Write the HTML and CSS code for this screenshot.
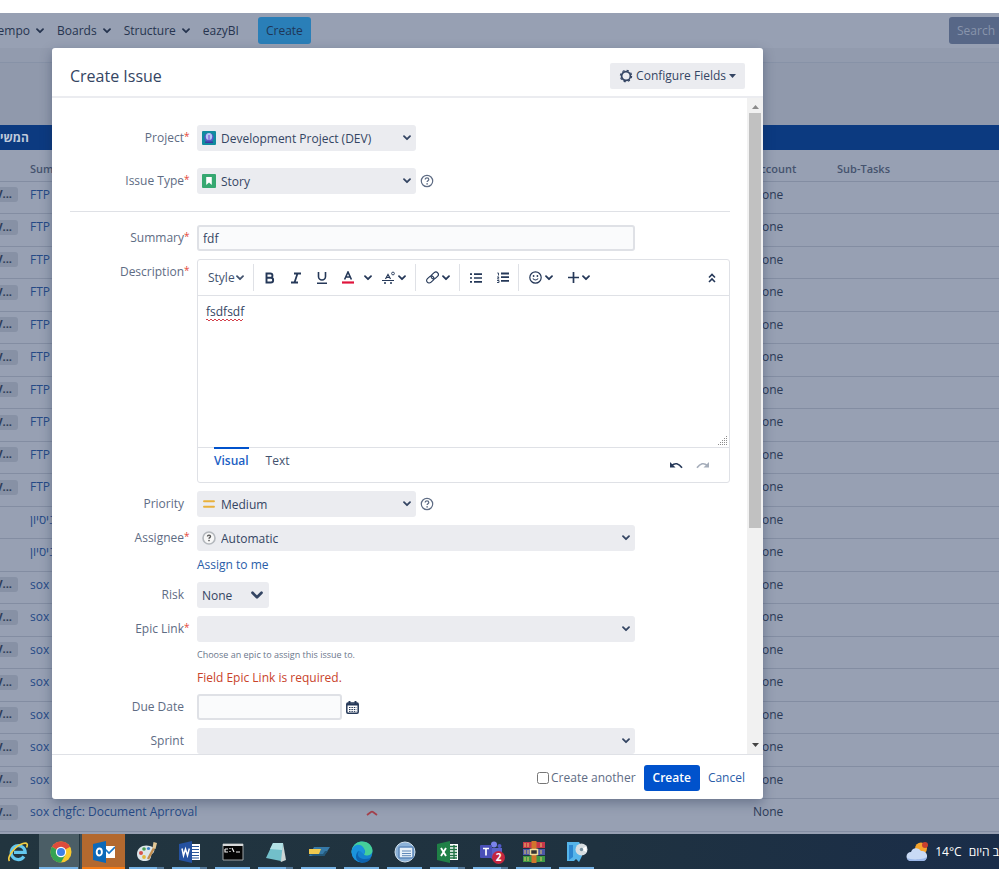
FILE: index.html
```html
<!DOCTYPE html>
<html lang="en">
<head>
    <meta charset="UTF-8">
    <meta name="viewport" content="width=device-width, initial-scale=1.0">
    <title>Create Issue</title>
    <link rel="stylesheet" href="styles.css">
</head>
<body>

    <!-- Shared icons -->
    <svg class="sprite" aria-hidden="true">
        <symbol id="chevron" viewBox="0 0 8 6"><path d="M1 1.2l3 3 3-3" fill="none" stroke="currentColor" stroke-width="1.8" stroke-linecap="round" stroke-linejoin="round"/></symbol>
        <symbol id="help" viewBox="0 0 14 14"><circle cx="7" cy="7" r="5.7" fill="none" stroke="currentColor" stroke-width="1.2"/><path d="M5.2 5.6c0-2.4 3.6-2.3 3.6-.1 0 1.3-1.7 1.2-1.7 2.6" fill="none" stroke="currentColor" stroke-width="1.2"/><circle cx="7.1" cy="9.9" r=".8" fill="currentColor"/></symbol>
        <symbol id="major" viewBox="0 0 12 6"><path d="M1 5l4-3q1-.6 2 0l4 3" fill="none" stroke="#a5414c" stroke-width="1.8"/></symbol>
    </svg>

    <div class="top-strip"></div>

    <main class="app">
        <nav class="navbar">
            <a href="#" class="nav-link">Tempo <svg class="chevron"><use href="#chevron"/></svg></a>
            <a href="#" class="nav-link">Boards <svg class="chevron"><use href="#chevron"/></svg></a>
            <a href="#" class="nav-link">Structure <svg class="chevron"><use href="#chevron"/></svg></a>
            <a href="#" class="nav-link">eazyBI</a>
            <button class="nav-create">Create</button>
            <input class="nav-search" type="text" placeholder="Search" aria-label="Search">
        </nav>
        <div class="subnav"></div>
        <div class="board-space"></div>
        <div class="board-title" dir="rtl" lang="he"><span>המשימות</span></div>

        <table class="issues">
            <colgroup><col class="c-status"><col class="c-summary"><col class="c-priority"><col class="c-account"><col></colgroup>
            <thead>
                <tr><th></th><th>Summary</th><th></th><th>Account</th><th>Sub-Tasks</th></tr>
            </thead>
            <tbody>
                <tr><td><span class="pill">V...</span></td><td><a href="#">FTP</a></td><td></td><td>None</td><td></td></tr>
                <tr><td><span class="pill">V...</span></td><td><a href="#">FTP</a></td><td></td><td>None</td><td></td></tr>
                <tr><td><span class="pill">V...</span></td><td><a href="#">FTP</a></td><td></td><td>None</td><td></td></tr>
                <tr><td><span class="pill">V...</span></td><td><a href="#">FTP</a></td><td></td><td>None</td><td></td></tr>
                <tr><td><span class="pill">V...</span></td><td><a href="#">FTP</a></td><td></td><td>None</td><td></td></tr>
                <tr><td><span class="pill">V...</span></td><td><a href="#">FTP</a></td><td></td><td>None</td><td></td></tr>
                <tr><td><span class="pill">V...</span></td><td><a href="#">FTP</a></td><td></td><td>None</td><td></td></tr>
                <tr><td><span class="pill">V...</span></td><td><a href="#">FTP</a></td><td></td><td>None</td><td></td></tr>
                <tr><td><span class="pill">V...</span></td><td><a href="#">FTP</a></td><td></td><td>None</td><td></td></tr>
                <tr><td><span class="pill">V...</span></td><td><a href="#">FTP</a></td><td></td><td>None</td><td></td></tr>
                <tr><td></td><td><a href="#" lang="he">ניסיון</a></td><td></td><td>None</td><td></td></tr>
                <tr><td></td><td><a href="#" lang="he">ניסיון</a></td><td></td><td>None</td><td></td></tr>
                <tr><td><span class="pill">V...</span></td><td><a href="#">sox</a></td><td></td><td>None</td><td></td></tr>
                <tr><td><span class="pill">V...</span></td><td><a href="#">sox</a></td><td></td><td>None</td><td></td></tr>
                <tr><td><span class="pill">V...</span></td><td><a href="#">sox</a></td><td></td><td>None</td><td></td></tr>
                <tr><td><span class="pill">V...</span></td><td><a href="#">sox</a></td><td></td><td>None</td><td></td></tr>
                <tr><td><span class="pill">V...</span></td><td><a href="#">sox</a></td><td></td><td>None</td><td></td></tr>
                <tr><td><span class="pill">V...</span></td><td><a href="#">sox</a></td><td></td><td>None</td><td></td></tr>
                <tr><td><span class="pill">V...</span></td><td><a href="#">sox</a></td><td></td><td>None</td><td></td></tr>
                <tr><td><span class="pill">V...</span></td><td><a href="#">sox chgfc: Document Aprroval</a></td><td><svg class="major"><use href="#major"/></svg></td><td>None</td><td></td></tr>
            </tbody>
        </table>

        <!-- Create issue dialog -->
        <div class="overlay">
            <form class="dialog" role="dialog" aria-labelledby="dialogTitle">
                <header class="dialog-header">
                    <h2 id="dialogTitle">Create Issue</h2>
                    <button type="button" class="btn-configure">
                        <svg width="14" height="14" viewBox="0 0 14 14"><circle cx="7" cy="7" r="4.4" fill="none" stroke="currentColor" stroke-width="1.7"/><circle cx="7" cy="7" r="5.600" fill="none" stroke="currentColor" stroke-width="1.200" stroke-dasharray="2.200 2.200"/></svg>
                        Configure Fields
                        <svg width="7" height="4" viewBox="0 0 7 4"><path d="M0 0h7L3.500 4z" fill="currentColor"/></svg>
                    </button>
                </header>

                <div class="dialog-body">
                    <div class="fields">
                        <div class="field wide-gap">
                            <label for="project">Project<sup>*</sup></label>
                            <div class="select medium has-icon">
                                <svg class="field-icon" viewBox="0 0 14 14"><rect width="14" height="14" rx="1" fill="#118b9f"/><circle cx="7" cy="6.500" r="4.600" fill="#5c54c8"/><ellipse cx="7" cy="5.500" rx="3.200" ry="3.500" fill="#b4c9f4"/><path d="M7 4v5" stroke="#9a85df" stroke-width="2"/><path d="M3 10.500h8v1.500H3z" fill="#3a39a0"/></svg>
                                <select id="project"><option>Development Project (DEV)</option></select>
                                <svg class="chevron"><use href="#chevron"/></svg>
                            </div>
                        </div>
                        <div class="field wide-gap">
                            <label for="type">Issue Type<sup>*</sup></label>
                            <div class="select medium has-icon">
                                <svg class="field-icon" viewBox="0 0 14 14"><rect width="14" height="14" rx="1" fill="#36a871"/><path d="M4.200 3h5.600v8L7 8.500 4.200 11z" fill="#fff"/></svg>
                                <select id="type"><option>Story</option></select>
                                <svg class="chevron"><use href="#chevron"/></svg>
                            </div>
                            <svg class="help"><use href="#help"/></svg>
                        </div>
                        <hr>
                        <div class="field">
                            <label for="summary">Summary<sup>*</sup></label>
                            <input class="text-input long" id="summary" type="text" value="fdf">
                        </div>
                        <div class="field top">
                            <label for="description">Description<sup>*</sup></label>
                            <div class="editor">
                                <div class="toolbar">
                                    <div class="tool-group">
                                        <button type="button" class="tool style">Style<svg class="chevron"><use href="#chevron"/></svg></button>
                                    </div>
                                    <div class="tool-group format">
                                        <button type="button" class="tool" aria-label="Bold"><svg width="12" height="12" viewBox="0 0 12 12"><path d="M2.500 1.500h3.800a2.100 2.100 0 0 1 0 4.300H2.500zM2.500 5.800h4.300a2.300 2.300 0 0 1 0 4.700H2.500z" fill="none" stroke="currentColor" stroke-width="1.900"/></svg></button>
                                        <button type="button" class="tool" aria-label="Italic"><svg width="12" height="12" viewBox="0 0 12 12"><path d="M4 1.500h7M1 10.500h7M7.500 1.500l-3 9" fill="none" stroke="currentColor" stroke-width="1.800"/></svg></button>
                                        <button type="button" class="tool" aria-label="Underline"><svg width="12" height="12" viewBox="0 0 12 12"><path d="M2.500 0v4.500a3.500 3.500 0 0 0 7 0V0M1 11.200h10" fill="none" stroke="currentColor" stroke-width="1.600"/></svg></button>
                                        <button type="button" class="tool" aria-label="Text colour"><svg width="12" height="13" viewBox="0 0 12 13"><path d="M2.600 8.500L6 1l3.400 7.500M3.800 6h4.400" fill="none" stroke="currentColor" stroke-width="1.600"/><path d="M0 11.500h12" stroke="#e0143c" stroke-width="2.200"/></svg></button>
                                        <button type="button" class="tool" aria-label="More colours"><svg class="chevron"><use href="#chevron"/></svg></button>
                                        <button type="button" class="tool" aria-label="More formatting"><svg width="13" height="14" viewBox="0 0 13 14"><path d="M3.500 8L6 3.500 8.500 8M4.500 6.500h3" fill="none" stroke="currentColor" stroke-width="1.200"/><path d="M0 9.500h12" stroke="currentColor"/><path d="M2 12h2M8 12h2" stroke="currentColor" stroke-width="1.600"/><circle cx="11" cy="2.500" r="1.400" fill="none" stroke="currentColor" stroke-width=".9"/></svg><svg class="chevron"><use href="#chevron"/></svg></button>
                                    </div>
                                    <div class="tool-group">
                                        <button type="button" class="tool" aria-label="Link"><svg width="13" height="13" viewBox="0 0 13 13"><g fill="none" stroke="currentColor" stroke-width="1.200" transform="rotate(-42 6.500 6.500)"><rect x="-.5" y="4" width="8" height="5" rx="2.500"/><rect x="5.500" y="4" width="8" height="5" rx="2.500"/></g></svg><svg class="chevron"><use href="#chevron"/></svg></button>
                                    </div>
                                    <div class="tool-group lists">
                                        <button type="button" class="tool" aria-label="Bullet list"><svg width="12" height="10" viewBox="0 0 12 10"><path d="M4 1.200h8M4 5h8M4 8.800h8M0 1.200h2M0 5h2M0 8.800h2" stroke="currentColor" stroke-width="1.700"/></svg></button>
                                        <button type="button" class="tool" aria-label="Numbered list"><svg width="12" height="11" viewBox="0 0 12 11"><path d="M4 1.500h8M4 5.200h8M4 8.900h8" stroke="currentColor" stroke-width="1.800"/><path d="M.3 1h1.200v2.500M0 5h2L.5 7h1.700M0 8.500h2v2H0" fill="none" stroke="currentColor" stroke-width=".9"/></svg></button>
                                    </div>
                                    <div class="tool-group inserts">
                                        <button type="button" class="tool" aria-label="Emoji"><svg width="13" height="13" viewBox="0 0 13 13"><circle cx="6.500" cy="6.500" r="5.700" fill="none" stroke="currentColor" stroke-width="1.200"/><circle cx="4.600" cy="5" r=".9" fill="currentColor"/><circle cx="8.400" cy="5" r=".9" fill="currentColor"/><path d="M3.800 7.500q2.700 3 5.400 0" fill="none" stroke="currentColor" stroke-width="1.100"/></svg><svg class="chevron"><use href="#chevron"/></svg></button>
                                        <button type="button" class="tool" aria-label="Insert"><svg width="11" height="11" viewBox="0 0 11 11"><path d="M5.500 0v11M0 5.500h11" stroke="currentColor" stroke-width="1.700"/></svg><svg class="chevron"><use href="#chevron"/></svg></button>
                                    </div>
                                    <button type="button" class="tool collapse" aria-label="Collapse toolbar"><svg width="8" height="10" viewBox="0 0 8 10"><path d="M1 4.500l3-3 3 3M1 9l3-3 3 3" fill="none" stroke="currentColor" stroke-width="1.600"/></svg></button>
                                </div>
                                <div class="editor-area">
                                    <textarea id="description" spellcheck="false">fsdfsdf</textarea>
                                    <svg class="squiggle" viewBox="0 0 38 3"><path d="M0 2l1-1 2 2 2-2 2 2 2-2 2 2 2-2 2 2 2-2 2 2 2-2 2 2 2-2 2 2 2-2 2 2 2-2 2 2 2-2" fill="none" stroke="#d3404b"/></svg>
                                    <svg class="grip" viewBox="0 0 9 9"><path d="M0 8.500h9M2 6.500h7M4 4.500h5M6 2.500h3M8 .5h1" stroke="#8d8d8d" stroke-dasharray="1 1"/></svg>
                                </div>
                                <div class="editor-footer">
                                    <div class="tabs">
                                        <button type="button" class="tab active">Visual</button>
                                        <button type="button" class="tab">Text</button>
                                    </div>
                                    <div class="history">
                                        <button type="button" class="tool" aria-label="Undo"><svg width="13" height="7" viewBox="0 0 13 7"><path d="M1.500 3.500Q7-1 12 5.800" fill="none" stroke="currentColor" stroke-width="1.600"/><path d="M0 0v5.500h5.500z" fill="currentColor"/></svg></button>
                                        <button type="button" class="tool" aria-label="Redo" disabled><svg width="13" height="7" viewBox="0 0 13 7"><path d="M11.500 3.500Q6-1 1 5.800" fill="none" stroke="currentColor" stroke-width="1.600"/><path d="M13 0v5.500H7.500z" fill="currentColor"/></svg></button>
                                    </div>
                                </div>
                            </div>
                        </div>
                        <div class="field">
                            <label for="priority">Priority</label>
                            <div class="select medium has-icon">
                                <svg class="field-icon" viewBox="0 0 14 14"><path d="M2 4.300h10M2 9.700h10" stroke="#e9b13c" stroke-width="1.900" stroke-linecap="round"/></svg>
                                <select id="priority"><option>Medium</option></select>
                                <svg class="chevron"><use href="#chevron"/></svg>
                            </div>
                            <svg class="help"><use href="#help"/></svg>
                        </div>
                        <div class="field">
                            <label for="assignee">Assignee<sup>*</sup></label>
                            <div class="select long has-icon">
                                <svg class="field-icon" viewBox="0 0 14 14"><circle cx="7" cy="7" r="6" fill="#f7f7f7" stroke="#b4b8bd" stroke-width="1.600"/><path d="M5.500 5.600c0-2 3-2 3 0 0 1-1.500 1-1.500 2.200" fill="none" stroke="#555" stroke-width="1.400"/><circle cx="7" cy="9.600" r=".8" fill="#555"/></svg>
                                <select id="assignee"><option>Automatic</option></select>
                                <svg class="chevron"><use href="#chevron"/></svg>
                            </div>
                        </div>
                        <div class="field-note assign"><a href="#">Assign to me</a></div>
                        <div class="field">
                            <label for="risk">Risk</label>
                            <div class="select short">
                                <select id="risk"><option>None</option></select>
                                <svg class="chevron big"><use href="#chevron"/></svg>
                            </div>
                        </div>
                        <div class="field">
                            <label for="epic">Epic Link<sup>*</sup></label>
                            <div class="select long">
                                <select id="epic"><option></option></select>
                                <svg class="chevron"><use href="#chevron"/></svg>
                            </div>
                        </div>
                        <div class="field-note hint">Choose an epic to assign this issue to.</div>
                        <div class="field-note error">Field Epic Link is required.</div>
                        <div class="field">
                            <label for="due">Due Date</label>
                            <input class="text-input date" id="due" type="text">
                            <button type="button" class="tool calendar" aria-label="Pick a date"><svg width="13" height="13" viewBox="0 0 13 13"><rect x=".8" y="2" width="11.400" height="10.200" rx="1.200" fill="none" stroke="currentColor" stroke-width="1.500"/><path d="M1 3.500h11M3.500 0v3M9.500 0v3" stroke="currentColor" stroke-width="1.900"/><path d="M3 6.500h7.500M3 8.500h7.500M3 10.400h7.500" stroke="currentColor" stroke-width="1" stroke-dasharray="1.500 .9"/></svg></button>
                        </div>
                        <div class="field">
                            <label for="sprint">Sprint</label>
                            <div class="select long">
                                <select id="sprint"><option></option></select>
                                <svg class="chevron"><use href="#chevron"/></svg>
                            </div>
                        </div>
                    </div>
                    <div class="scrollbar">
                        <svg width="7" height="4" viewBox="0 0 7 4"><path d="M0 4h7L3.500 0z" fill="#8b8b8b"/></svg>
                        <div class="thumb"></div>
                        <svg width="7" height="4" viewBox="0 0 7 4"><path d="M0 0h7L3.500 4z" fill="#444"/></svg>
                    </div>
                </div>

                <footer class="dialog-footer">
                    <label class="another"><input type="checkbox">Create another</label>
                    <button type="submit" class="btn-primary">Create</button>
                    <a href="#">Cancel</a>
                </footer>
            </form>
        </div>
    </main>

    <!-- Windows taskbar -->
    <footer class="taskbar">
        <button class="task idle" aria-label="Internet Explorer"><svg viewBox="0 0 22 22"><path d="M17 15.500a7 7 0 1 1 1.200-4.200H7" fill="none" stroke="#64c8ef" stroke-width="3.200"/><path d="M2.500 20C-.5 16 8 5 16 2.500c4.500-1.400 5 1.200 3.500 4" fill="none" stroke="#f2cf45" stroke-width="1.700"/></svg></button>
        <button class="task chrome" aria-label="Chrome"><svg viewBox="0 0 22 22"><circle cx="11" cy="11" r="10.500" fill="#f9c92d"/><path d="M11 11L1.900 5.700A10.500 10.500 0 0 1 20.100 5.700z" fill="#df4b3c"/><path d="M11 11L1.900 5.700A10.500 10.500 0 0 0 11 21.500l4.500-8z" fill="#35a353"/><path d="M11 6h9.200l-.5-1L5 4z" fill="#df4b3c"/><circle cx="11" cy="11" r="5.200" fill="#fff"/><circle cx="11" cy="11" r="4" fill="#3f80e8"/></svg></button>
        <button class="task outlook" aria-label="Outlook"><svg viewBox="0 0 22 22"><path d="M9 5h13v12H9z" fill="#fff"/><path d="M10 6l6 6 6-6" fill="none" stroke="#1774c4" stroke-width="1.600"/><path d="M0 3l13-3v22L0 19z" fill="#0c69b8"/><ellipse cx="6.300" cy="11" rx="2.600" ry="3.500" fill="none" stroke="#fff" stroke-width="1.900"/></svg></button>
        <button class="task stacked" aria-label="Paint"><svg viewBox="0 0 22 22"><path d="M1 13C1 6 8 3 14 5c6 2 5 6 2 8-2 1 1 6-6 7-5 .6-9-2-9-7z" fill="#dce6ea"/><circle cx="5" cy="12" r="2" fill="#d6524c"/><circle cx="8" cy="8" r="1.800" fill="#4a9d52"/><circle cx="12.500" cy="7.500" r="1.600" fill="#3d82c9"/><circle cx="8" cy="16" r="1.900" fill="#e4b83d"/><path d="M12 18l6-11" stroke="#c18d4e" stroke-width="2.400"/><path d="M16.500 7l1-6 3.500 1-1.500 6z" fill="#e2c795"/></svg></button>
        <button class="task stacked" aria-label="Word"><svg viewBox="0 0 22 22"><path d="M10 3h11v16H10z" fill="#fff"/><path d="M13 5.500h7M13 8.500h7M13 11.500h7M13 14.500h7M13 17h7" stroke="#2b579a" stroke-width="1.200"/><path d="M0 3l13-3v22L0 19z" fill="#2451a0"/><path d="M3 7.500l1.500 7L6.500 8l2 6.500 1.800-7" fill="none" stroke="#fff" stroke-width="1.500"/></svg></button>
        <button class="task" aria-label="Command Prompt"><svg viewBox="0 0 22 22"><path d="M1 3h20v16H1z" fill="#050505" stroke="#9fa4a6"/><path d="M1 4h20" stroke="#d7d9da" stroke-width="2"/><path d="M3 8h3M3 8v3h3M8 7v1M8 10v1M10 7l2 4M14 11h4" fill="none" stroke="#eee" stroke-width="1.200"/></svg></button>
        <button class="task stacked" aria-label="Notepad"><svg viewBox="0 0 22 22"><path d="M8 2h10l3 17-5 2z" fill="#cdd6d5"/><path d="M8 2h10l-2 18-15-3z" fill="#72bfca"/><path d="M8 2h10l-1 7-12-1z" fill="#b3e1e5"/></svg></button>
        <button class="task" aria-label="Scanner"><svg viewBox="0 0 22 22"><path d="M6 6h16l-6 9H1z" fill="#3679a7"/><path d="M1 8h12l-2 5H1z" fill="#f0c94e"/><path d="M1 13h14l2-3h3l-4 5H5z" fill="#235779"/></svg></button>
        <button class="task" aria-label="Edge"><svg viewBox="0 0 22 22"><circle cx="11" cy="11" r="10.500" fill="#1583cf"/><path d="M.8 9C2 3 7 .5 11 .5c7 0 10.500 5 10.500 9 0 4-3.500 5-6 5-2 0-3-1-2-2 2-3-1-6-5-5.500C4 7.500 2 10 .5 12z" fill="#45cf9a"/><path d="M.6 10C2 3 9 2 12 6c2 2 2 5 1 7-1 1-3-4-6-3-3 2-1 9 5 11.400C5 21 .5 17 .6 10z" fill="#1b93dc"/><path d="M8 10c-4 6 3 10 12 7-3 5-9 6-12 3.500C3 17 5 12 8 10z" fill="#0d63b0"/></svg></button>
        <button class="task" aria-label="Viewer"><svg viewBox="0 0 22 22"><circle cx="11" cy="11" r="10" fill="#8cb2d8" stroke="#d0e0ed"/><rect x="5" y="6" width="14" height="11" rx="1" fill="#e7f0f8" stroke="#5c88bb" stroke-width="1.500"/><path d="M8 10h9M8 12.500h9M8 14.700h9" stroke="#6089b9"/></svg></button>
        <button class="task stacked" aria-label="Excel"><svg viewBox="0 0 22 22"><path d="M11 3h10v16H11z" fill="#fff"/><path d="M13 5.500h7M13 8.500h7M13 11.500h7M13 14.500h7M13 17h7M17 4v14" stroke="#217346" stroke-width="1.400"/><path d="M0 3l13-3v22L0 19z" fill="#1f8046"/><path d="M4 7l5 8M9 7l-5 8" stroke="#fff" stroke-width="1.900"/></svg></button>
        <button class="task stacked" aria-label="Teams"><svg viewBox="0 0 22 22"><circle cx="14" cy="3.500" r="3" fill="#7b83eb"/><circle cx="19.500" cy="5" r="2" fill="#5059c9"/><path d="M10 7h12v7c0 5-11 7-12 1z" fill="#5a62c9"/><rect y="4" width="12" height="13" rx="1" fill="#4a50b8"/><path d="M3 7.500h6M6 7.500v7" stroke="#fff" stroke-width="1.700"/></svg><span class="badge">2</span></button>
        <button class="task" aria-label="WinRAR"><svg viewBox="0 0 22 22"><path d="M0 1h22v6H0z" fill="#c8374a"/><path d="M0 8h22v6H0z" fill="#4e58a8"/><path d="M0 15h22v6H0z" fill="#3e9a45"/><path d="M2 2v4M5 2v4M18 2v4M2 9v4M5 9v4M18 9v4M2 16v4M5 16v4M18 16v4" stroke="#e3c568"/><path d="M8.500 0h5v22h-5z" fill="#d0762c"/><rect x="7.500" y="8.500" width="7" height="5" fill="#333" stroke="#f0dc9a" stroke-width="1.500"/></svg></button>
        <button class="task" aria-label="Installer"><svg viewBox="0 0 22 22"><path d="M1 1h12l3 5v9l-3 6-3-3-2 2H1z" fill="#56b5ea"/><path d="M3 4h4v12l-4 3z" fill="#2b86d0"/><circle cx="15.500" cy="8.500" r="6" fill="#d7dde0"/><path d="M15.500 8.500l5-3.500v6z" fill="#fff"/><circle cx="15.500" cy="8.500" r="1.700" fill="#718c9b"/></svg></button>
        <div class="weather">
            <svg viewBox="0 0 22 22"><circle cx="15" cy="7.500" r="6" fill="#f6a52d"/><circle cx="19" cy="4" r="3" fill="#c9402e"/><path d="M5 20a4.500 4.500 0 0 1 0-9 5.500 5.500 0 0 1 10-1 5 5 0 0 1 2 10z" fill="#c9daf5"/><path d="M1 17c3 2 16 2 20-1-1 3-2 4-4 4H5c-2 0-4-1-4-3z" fill="#9bb7e8"/></svg>
            <span>14°C</span>
            <span lang="he" class="forecast">ב היום</span>
        </div>
    </footer>

</body>
</html>
```

FILE: styles.css
```css
* {
    box-sizing: border-box;
}

body {
    margin: 0;
    height: 100vh;
    display: flex;
    flex-direction: column;
    overflow: hidden;
    font-family: "Open Sans", "DejaVu Sans", sans-serif;
    font-size: 12px;
    line-height: 16px;
    color: #344563;
    background-color: #fff;
}

button, input, select, textarea {
    font: inherit;
    color: inherit;
    margin: 0;
}

button {
    border: 0;
    padding: 0;
    background: none;
    cursor: pointer;
}

a {
    color: #2a5da8;
    text-decoration: none;
}

svg {
    flex: none;
}

.sprite {
    position: absolute;
    width: 0;
    height: 0;
}

.chevron {
    width: 8px;
    height: 6px;
}

.top-strip {
    flex: none;
    height: 13px;
}

/* Page behind the dialog */
.app {
    position: relative;
    flex: 1;
    min-height: 0;
    overflow: hidden;
    background-color: #97a0b3;
}

.navbar {
    display: flex;
    align-items: center;
    height: 35px;
    margin-left: -9px;
}

.nav-link {
    display: flex;
    align-items: center;
    gap: 6px;
    margin-right: 13px;
    color: #26344f;
}

.nav-create {
    height: 27px;
    margin-left: 6px;
    padding: 0 8px;
    border-radius: 3px;
    background-color: #2a7fb8;
    color: #1f3657;
}

.nav-search {
    width: 60px;
    height: 27px;
    margin-left: auto;
    margin-right: -10px;
    padding: 0 8px;
    border: 0;
    border-radius: 3px;
    background-color: #576787;
}

.nav-search::placeholder {
    color: #8995ac;
    opacity: 1;
}

.subnav {
    height: 15px;
    background-color: #929bae;
    border-bottom: 1px solid #8792a7;
}

.board-space {
    height: 62px;
    background-color: #9099ac;
}

.board-title {
    height: 25px;
    background-color: #0c3a80;
    color: #c0cadb;
    font-weight: 700;
    line-height: 25px;
}

.board-title span {
    display: block;
    width: 29px;
    margin-right: auto;
    white-space: nowrap;
}

.issues {
    width: 100%;
    table-layout: fixed;
    border-collapse: collapse;
}

.c-status {
    width: 30px;
}

.c-summary {
    width: 336px;
}

.c-priority {
    width: 387px;
}

.c-account {
    width: 84px;
}

.issues th {
    height: 31px;
    padding: 7px 0 0;
    text-align: left;
    font-size: 11px;
    font-weight: 600;
    color: #45536e;
    border-bottom: 1px solid #838da2;
}

.issues td {
    height: 32px;
    padding: 0 0 5px;
    white-space: nowrap;
    color: #2b3a57;
    border-bottom: 1px solid #838da2;
}

.issues tr:nth-child(even) td {
    height: 33px;
}

.issues a {
    color: #254a86;
}

.pill {
    display: block;
    width: 30px;
    height: 15px;
    margin-left: -12px;
    padding-right: 6px;
    border-radius: 3px;
    background-color: #8791a5;
    color: #2f3d59;
    font-size: 11px;
    font-weight: 700;
    line-height: 14px;
    text-align: right;
}

.major {
    width: 12px;
    height: 6px;
}

/* Dialog */
.overlay {
    position: absolute;
    inset: 0;
    display: flex;
    padding: 35px 236px 35px 52px;
}

.dialog {
    flex: 1;
    min-width: 0;
    display: flex;
    flex-direction: column;
    background-color: #fff;
    border-radius: 3px;
    box-shadow: 0 4px 12px rgba(20, 35, 65, 0.35);
}

.dialog-header {
    display: flex;
    align-items: center;
    justify-content: space-between;
    height: 50px;
    padding: 7px 18px 0;
    border-bottom: 2px solid #ebecf0;
}

.dialog-header h2 {
    margin: 0;
    font-size: 16px;
    font-weight: 400;
    line-height: 24px;
}

.btn-configure {
    display: flex;
    align-items: center;
    justify-content: center;
    gap: 3px;
    height: 26px;
    padding: 0 9px;
    border-radius: 2px;
    background-color: #ebecf0;
}

.dialog-body {
    flex: 1;
    min-height: 0;
    display: flex;
    overflow: hidden;
}

.fields {
    flex: 1;
    min-width: 0;
    padding: 27px 17px 0 18px;
}

.field {
    display: flex;
    align-items: center;
    margin-bottom: 8px;
}

.field.wide-gap {
    margin-bottom: 17px;
}

.field.top {
    align-items: flex-start;
}

.field label {
    position: relative;
    flex: none;
    width: 114px;
    margin-right: 13px;
    text-align: right;
    font-weight: 500;
    color: #5e6c84;
}

.field.top label {
    margin-top: 5px;
}

.field sup {
    position: absolute;
    left: 100%;
    top: -1px;
    color: #e5493a;
    font-size: 10px;
    line-height: 14px;
}

.fields hr {
    height: 1px;
    margin: 0 0 13px;
    border: 0;
    background-color: #dfe1e6;
}

.select {
    position: relative;
    height: 26px;
    border-radius: 3px;
    background-color: #ebecf0;
}

.select select {
    display: block;
    width: 100%;
    height: 100%;
    padding: 1px 20px 0 5px;
    border: 0;
    background: none;
    appearance: none;
}

.select.has-icon select {
    padding-left: 24px;
}

.select .chevron {
    position: absolute;
    right: 5px;
    top: 10px;
    pointer-events: none;
}

.select .chevron.big {
    width: 12px;
    height: 9px;
    right: 6px;
    top: 9px;
}

.field-icon {
    position: absolute;
    left: 5px;
    top: 6px;
    width: 14px;
    height: 14px;
}

.medium {
    width: 219px;
}

.long {
    width: 438px;
}

.short {
    width: 72px;
}

.date {
    width: 145px;
}

.help {
    width: 14px;
    height: 14px;
    margin-left: 4px;
    color: #5e6c84;
}

.text-input {
    height: 26px;
    padding: 0 4px;
    border: 2px solid #dfe1e6;
    border-radius: 3px;
    background-color: #fafbfc;
}

.calendar {
    margin-left: 4px;
}

/* Rich text editor */
.editor {
    flex: 1;
    min-width: 0;
    border: 1px solid #dfe1e6;
    border-radius: 3px;
}

.toolbar {
    display: flex;
    align-items: center;
    height: 36px;
    border-bottom: 1px solid #dfe1e6;
}

.tool {
    display: flex;
    align-items: center;
    gap: 3px;
    color: #253858;
}

.tool.style {
    gap: 1px;
    color: #42526e;
}

.tool:disabled {
    color: #a5adba;
}

.tool-group {
    display: flex;
    align-items: center;
    height: 27px;
    padding: 0 9px 0 10px;
    border-right: 1px solid #dfe1e6;
}

.tool-group.format {
    gap: 14px;
}

.tool-group.format .tool:nth-child(5) {
    margin-left: -4px;
    margin-right: -4px;
}

.tool-group.lists {
    gap: 15px;
}

.tool-group.inserts {
    gap: 15px;
    border-right: 0;
}

.collapse {
    margin-left: auto;
    margin-right: 13px;
}

.editor-area {
    position: relative;
    height: 151px;
}

.editor-area textarea {
    display: block;
    width: 100%;
    height: 100%;
    padding: 8px;
    border: 0;
    background: none;
    resize: none;
}

.squiggle {
    position: absolute;
    left: 8px;
    top: 22px;
    width: 38px;
    height: 3px;
}

.grip {
    position: absolute;
    right: 2px;
    bottom: 2px;
    width: 9px;
    height: 9px;
}

.editor-footer {
    display: flex;
    justify-content: space-between;
    height: 35px;
    padding: 0 20px 0 16px;
    border-top: 1px solid #dfe1e6;
}

.tabs {
    display: flex;
    gap: 17px;
    margin-top: -1px;
}

.tab {
    height: 24px;
    padding-top: 2px;
    border-top: 2px solid transparent;
    font-weight: 500;
    color: #42526e;
}

.tab.active {
    border-top-color: #0052cc;
    font-weight: 600;
    color: #2060c4;
}

.history {
    display: flex;
    align-items: center;
    gap: 13px;
}

/* Notes under a field */
.field-note {
    margin-left: 127px;
}

.field-note.assign {
    margin-top: -2px;
    margin-bottom: 9px;
}

.field-note.hint {
    margin-top: -3px;
    font-size: 9px;
    color: #6b778c;
}

.field-note.error {
    margin-top: 7px;
    margin-bottom: 8px;
    color: #c9432b;
}

.scrollbar {
    flex: none;
    display: flex;
    flex-direction: column;
    align-items: center;
    width: 16px;
    padding: 7px 0;
    background-color: #f1f1f1;
}

.scrollbar .thumb {
    width: 12px;
    height: 415px;
    margin-top: 4px;
    margin-bottom: auto;
    background-color: #c1c1c1;
}

.dialog-footer {
    display: flex;
    align-items: center;
    justify-content: flex-end;
    height: 45px;
    padding: 1px 18px 0;
    border-top: 1px solid #dfe1e6;
}

.another {
    display: flex;
    align-items: center;
    gap: 2px;
    color: #5e6c84;
    font-weight: 500;
}

.another input {
    width: 12px;
    height: 12px;
}

.btn-primary {
    height: 26px;
    margin: 0 8px;
    padding: 0 9px;
    border-radius: 3px;
    background-color: #0052cc;
    color: #fff;
    font-weight: 600;
}

/* Taskbar */
.taskbar {
    flex: none;
    display: flex;
    height: 35px;
    padding-right: 4px;
    margin-left: -4px;
    background: linear-gradient(90deg, #22353f, #1f3240 60%, #1a2d49);
}

.task {
    position: relative;
    display: flex;
    align-items: center;
    justify-content: center;
    width: 43px;
}

.task svg, .weather svg {
    width: 22px;
    height: 22px;
}

.task::after {
    content: "";
    position: absolute;
    left: 4px;
    right: 4px;
    bottom: 0;
    height: 2px;
    background-color: #76b3e6;
}

.task.stacked::after {
    background: linear-gradient(90deg, #76b3e6 28px, #54799a 28px);
}

.task.idle::after {
    display: none;
}

.task.chrome {
    background: linear-gradient(90deg, #4b5e66 40px, #22353f 40px, #22353f 41px, #3c4d55 41px);
}

.task.chrome::after {
    left: 0;
}

.task.outlook {
    background-color: #b3692f;
}

.task.outlook::after {
    left: 0;
    right: 0;
    background-color: #f57c16;
}

.badge {
    position: absolute;
    right: 7px;
    bottom: 5px;
    width: 13px;
    height: 13px;
    border-radius: 50%;
    background-color: #c4263f;
    color: #fff;
    font-size: 10px;
    font-weight: 700;
    line-height: 13px;
}

.weather {
    display: flex;
    align-items: center;
    gap: 7px;
    margin-left: auto;
    margin-right: -4px;
    color: #fff;
}
```
